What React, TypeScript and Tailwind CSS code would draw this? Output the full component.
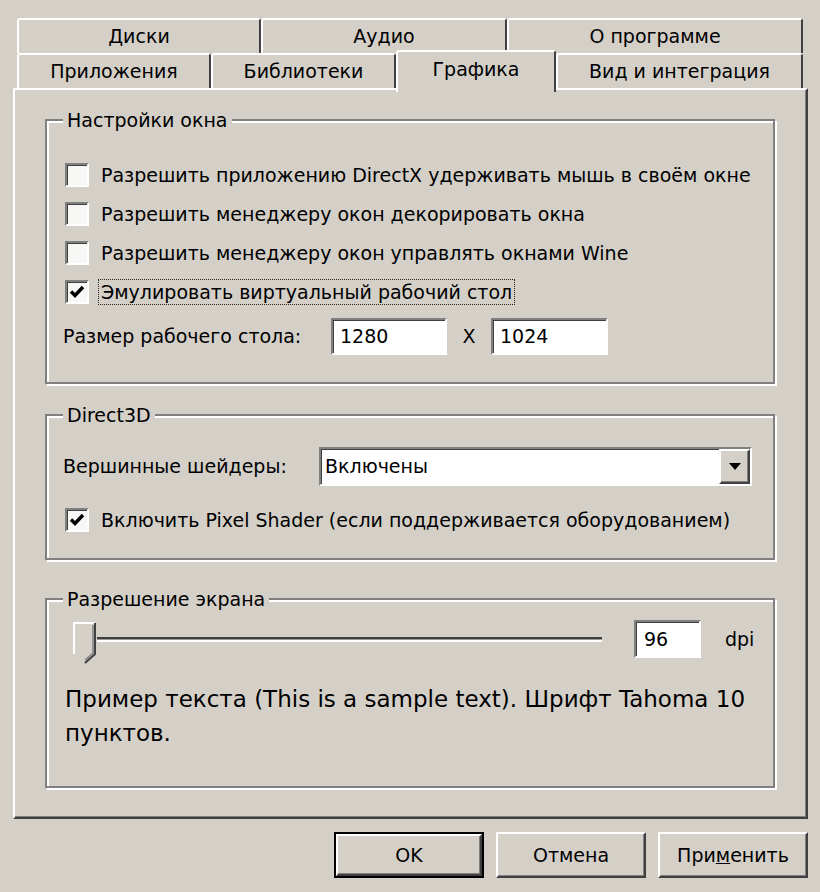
import React from "react";

const raised =
  "border-2 border-t-white border-l-white border-r-[#404040] border-b-[#404040] shadow-[inset_-1px_-1px_0_#808080]";
const sunken =
  "border-2 border-t-[#808080] border-l-[#808080] border-r-white border-b-white shadow-[inset_1px_1px_0_#404040]";

const topTabs = [
  { name: "Диски", w: "w-[244px]" },
  { name: "Аудио", w: "w-[246px]" },
  { name: "О программе", w: "w-[296px]" },
];

function Tab({ name, w, active }: { name: string; w: string; active?: boolean }) {
  if (active) {
    return (
      <div
        className={`${w} relative z-10 -mt-[3px] h-[42px] self-start rounded-t-[3px] border-l-2 border-r-2 border-t-2 border-l-white border-t-white border-r-[#404040] bg-[#d4d0c8] pb-[6px] flex items-center justify-center`}
      >
        {name}
      </div>
    );
  }
  return (
    <div
      className={`${w} h-full rounded-t-[3px] border-l-2 border-r-2 border-t-2 border-l-white border-t-white border-r-[#404040] flex items-center justify-center`}
    >
      {name}
    </div>
  );
}

function Checkbox({ checked }: { checked?: boolean }) {
  return (
    <div className={`${sunken} w-[24px] h-[24px] shrink-0 bg-[#f7f7f5] flex items-center justify-center`}>
      {checked && (
        <svg width="16" height="14" viewBox="0 0 16 14">
          <polyline points="2,6.5 6,10.5 14,2" fill="none" stroke="#000" strokeWidth="3.4" />
        </svg>
      )}
    </div>
  );
}

function CheckRow({ label, checked, focus }: { label: string; checked?: boolean; focus?: boolean }) {
  return (
    <div className="h-[39px] flex items-center gap-[9px]">
      <Checkbox checked={checked} />
      <span
        className={clsxLite(
          "px-[2px] leading-[24px] border",
          focus ? "border-dotted border-[#222]" : "border-transparent"
        )}
      >
        {label}
      </span>
    </div>
  );
}

function clsxLite(...c: string[]) {
  return c.filter(Boolean).join(" ");
}

function Group({ title, h, className, children }: { title: string; h: string; className?: string; children: React.ReactNode }) {
  return (
    <fieldset
      className={`${h} ${className ?? ""} w-[730px] border-2 border-[#808080] shadow-[2px_2px_0_#fff,inset_2px_2px_0_#fff] pl-[18px]`}
    >
      <legend className="ml-[-2px] px-[4px] bg-[#d4d0c8] leading-[24px]">{title}</legend>
      {children}
    </fieldset>
  );
}

export default function App() {
  return (
    <div className="w-[820px] h-[892px] overflow-hidden bg-[#d4d0c8] text-black text-[19px] font-['DejaVu_Sans','Liberation_Sans',sans-serif] flex flex-col">
      {/* tabs */}
      <div className="ml-[17px] mt-[18px] w-[786px]">
        <div className="flex h-[35px]">
          {topTabs.map((t) => (
            <Tab key={t.name} name={t.name} w={t.w} />
          ))}
        </div>
        <div className="flex h-[35px]">
          <Tab name="Приложения" w="w-[194px]" />
          <Tab name="Библиотеки" w="w-[185px]" />
          <Tab name="Графика" w="w-[160px]" active />
          <Tab name="Вид и интеграция" w="w-[247px]" />
        </div>
      </div>

      {/* panel */}
      <div className="ml-[13px] w-[795px] h-[731px] border-2 border-t-white border-l-white border-r-[#404040] border-b-[#404040] shadow-[inset_-1px_-1px_0_#808080] pl-[30px] pt-[18px]">
        <Group title="Настройки окна" h="h-[276px]">
          <div className="pt-[23px]">
            <CheckRow label="Разрешить приложению DirectX удерживать мышь в своём окне" />
            <CheckRow label="Разрешить менеджеру окон декорировать окна" />
            <CheckRow label="Разрешить менеджеру окон управлять окнами Wine" />
            <CheckRow label="Эмулировать виртуальный рабочий стол" checked focus />
            <div className="mt-[7px] h-[37px] flex items-center -ml-[2px]">
              <span className="w-[268px]">Размер рабочего стола:</span>
              <div className={`${sunken} w-[116px] h-[37px] bg-white flex items-center pl-[7px]`}>1280</div>
              <span className="w-[44px] text-center">X</span>
              <div className={`${sunken} w-[117px] h-[37px] bg-white flex items-center pl-[7px]`}>1024</div>
            </div>
          </div>
        </Group>

        <Group title="Direct3D" h="h-[157px]" className="mt-[19px]">
          <div className="pt-[20px]">
            <div className="h-[39px] flex items-center -ml-[2px]">
              <span className="w-[256px]">Вершинные шейдеры:</span>
              <div className={`${sunken} w-[433px] h-[39px] bg-white flex items-center justify-between`}>
                <span className="pl-[4px]">Включены</span>
                <div className={`${raised} w-[31px] h-[35px] bg-[#d4d0c8] flex items-center justify-center`}>
                  <svg width="12" height="7" viewBox="0 0 12 7">
                    <polygon points="0,0 12,0 6,7" fill="#000" />
                  </svg>
                </div>
              </div>
            </div>
            <div className="mt-[14px]">
              <CheckRow label="Включить Pixel Shader (если поддерживается оборудованием)" checked />
            </div>
          </div>
        </Group>

        <Group title="Разрешение экрана" h="h-[201px]" className="mt-[27px]">
          <div className="pt-[9px] -ml-[18px]">
            <div className="flex items-start h-[43px]">
              <svg width="24" height="43" viewBox="0 0 24 43" className="ml-[26px] mt-[2px] shrink-0">
                <polygon points="1,1 22,1 22,32 12,41 1,32" fill="#d4d0c8" />
                <polyline points="1,32 1,1 22,1" fill="none" stroke="#fff" strokeWidth="2" />
                <polyline points="22,1 22,32 12,41" fill="none" stroke="#404040" strokeWidth="2" />
                <polyline points="20,3 20,31 12,38" fill="none" stroke="#808080" strokeWidth="1.5" />
              </svg>
              <div className="mt-[17px] w-[505px] h-[5px] border-t-2 border-[#404040] border-b-2 border-b-white bg-[#9a9892]" />
              <div className={`${sunken} ml-[32px] w-[67px] h-[38px] bg-white flex items-center pl-[8px]`}>96</div>
              <span className="ml-[24px] h-[38px] flex items-center">dpi</span>
            </div>
            <p className="mt-[19px] ml-[18px] text-[23px] leading-[34px]">
              Пример текста (This is a sample text). Шрифт Tahoma 10
              <br />
              пунктов.
            </p>
          </div>
        </Group>
      </div>

      {/* buttons */}
      <div className="mt-[13px] flex justify-end gap-[12px] pr-[12px]">
        <div className="w-[150px] h-[46px] border-2 border-black">
          <div className={`${raised} h-full flex items-center justify-center`}>OK</div>
        </div>
        <div className={`${raised} w-[150px] h-[46px] flex items-center justify-center`}>Отмена</div>
        <div className={`${raised} w-[150px] h-[46px] flex items-center justify-center`}>
          При<span className="underline">м</span>енить
        </div>
      </div>
    </div>
  );
}
